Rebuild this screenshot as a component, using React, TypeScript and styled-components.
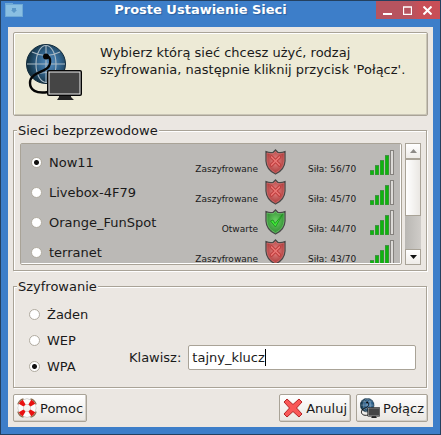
import React, { useId, useState } from "react";
import styled, { createGlobalStyle, css } from "styled-components";

const edge = "#a9a397";
const face = "#ebe7e2";

const GlobalStyle = createGlobalStyle`
  *, *::before, *::after { box-sizing: border-box; }
  body {
    margin: 0;
    font: 13px/15px "DejaVu Sans", Verdana, sans-serif;
    color: #1a1a1a;
  }
  button, input { font: inherit; color: inherit; }
`;

const Window = styled.main`
  display: flex;
  flex-direction: column;
  min-height: 100vh;
  padding: 0 7px 7px;
  border: 1px solid #24405f;
  background: #3d7ec9;
`;

const TitleBar = styled.header`
  display: grid;
  grid-template-columns: 64px 1fr 64px;
  height: 26px;
  margin: 0 -7px;
`;

const MenuButton = styled.button`
  display: block;
  justify-self: start;
  width: 18px;
  height: 14px;
  margin: 2px 0 0 4px;
  padding: 0;
  border: 0;
  background: none;
`;

const Title = styled.h1`
  margin: 0;
  padding-right: 40px;
  font-size: 13px;
  line-height: 17px;
  font-weight: bold;
  text-align: center;
  white-space: nowrap;
  color: #fff;
  text-shadow: 1px 1px 1px #2b5f9e;
`;

const WindowButtons = styled.div`
  display: flex;
  height: 18px;
  padding: 0 3px 0 1px;
  background: linear-gradient(90deg, #b7545f 0 36px, #c84f57 44px);
`;

const WindowButton = styled.button`
  flex: 1;
  display: grid;
  place-items: center;
  padding: 0;
  border: 0;
  background: none;
`;

const Body = styled.form`
  flex: 1;
  padding: 5px;
  background: ${face};
`;

const Banner = styled.section`
  display: flex;
  gap: 16px;
  min-height: 84px;
  padding: 11px 12px;
  border: 1px solid ${edge};
  border-radius: 2px;
  box-shadow: inset 1px 1px 0 #fff, inset -1px -1px 0 #c9c5b6;
  background: #edead6;
  svg { flex: none; }
`;

const BannerText = styled.p`
  margin: 0;
  padding: 0 2px;
  line-height: 17px;
`;

const Group = styled.fieldset<{ $roomy?: boolean }>`
  min-width: 0;
  margin: ${(p) => (p.$roomy ? "8px 1px 0 0" : "7px 1px 0 0")};
  padding: ${(p) => (p.$roomy ? "7px 10px 8px 15px" : "5px 5px 5px 6px")};
  border: 1px solid ${edge};
  box-shadow: 1px 1px 0 #fff, inset 1px 1px 0 #fff;
`;

const GroupTitle = styled.legend<{ $roomy?: boolean }>`
  margin-left: ${(p) => (p.$roomy ? "-12px" : "-3px")};
  padding: 0 1px;
  background: ${face};
`;

const ListArea = styled.div`
  display: grid;
  grid-template-columns: 1fr 16px;
  gap: 3px;
  height: 122px;
`;

const ListFrame = styled.div`
  display: flex;
  min-height: 0;
  padding: 0 1px 1px 0;
  border: 1px solid ${edge};
  border-radius: 2px;
  background: #fff;
`;

const NetworkList = styled.ul`
  flex: 1;
  margin: 0;
  padding: 3px 0 0;
  list-style: none;
  overflow-y: auto;
  scrollbar-width: none;
  background: #bbb9b6;
`;

const NetworkRow = styled.li`
  display: flex;
  align-items: center;
  height: 30px;
  padding: 0 6px 0 10px;
`;

const RadioLabel = styled.label<{ $tall?: boolean }>`
  flex: 1;
  display: flex;
  align-items: center;
  gap: 7px;
  ${(p) => p.$tall && css`height: 26px;`}
`;

const Radio = styled.input`
  appearance: none;
  flex: none;
  width: 11px;
  height: 11px;
  margin: 0;
  border: 1px solid #b0aba0;
  border-radius: 50%;
  background: #fff;
  &:checked {
    background: radial-gradient(circle, #111 0 2px, #fff 3px);
  }
`;

const Detail = styled.span<{ $strength?: boolean }>`
  align-self: flex-end;
  margin-bottom: 2px;
  font-size: 9px;
  line-height: 12px;
  white-space: nowrap;
  ${(p) => p.$strength && css`width: 52px; margin-left: 22px; margin-right: 10px;`}
`;

const ShieldSlot = styled.span`
  display: flex;
  margin-left: 7px;
`;

const ScrollBar = styled.div`
  display: flex;
  flex-direction: column;
  background: linear-gradient(90deg, #b9b7b3, #cfccc8);
`;

const ScrollButton = styled.button`
  display: grid;
  place-items: center;
  flex: none;
  height: 16px;
  padding: 0;
  border: 1px solid ${edge};
  background: linear-gradient(#fff, #efece8);
`;

const Thumb = styled.div`
  height: 57px;
  border: 1px solid ${edge};
  background: linear-gradient(90deg, #fff, #eae7e3);
`;

const Spring = styled.div`
  flex: 1;
`;

const Encryption = styled.div`
  display: grid;
  grid-template-columns: 100px 1fr;
  align-items: end;
`;

const KeyRow = styled.div`
  display: flex;
  align-items: center;
  gap: 7px;
  margin-bottom: 9px;
`;

const KeyField = styled.div`
  flex: 1;
  display: flex;
  align-items: center;
  height: 25px;
  padding: 0 3px;
  border: 1px solid ${edge};
  border-radius: 2px;
  background: #fff;
`;

const KeyInput = styled.input`
  field-sizing: content;
  min-width: 1px;
  padding: 0;
  border: 0;
  outline: 0;
  background: none;
  caret-color: transparent;
`;

const Caret = styled.span`
  width: 1px;
  height: 17px;
  background: #000;
`;

const Actions = styled.footer`
  display: flex;
  gap: 5px;
  margin-top: 6px;
`;

const ActionButton = styled.button`
  display: flex;
  align-items: center;
  gap: 3px;
  height: 28px;
  padding: 0 3px;
  border: 1px solid ${edge};
  border-radius: 2px;
  background: linear-gradient(#fff, #e9e6e1);
  box-shadow: inset -1px -1px 0 #d3cfc8;
  white-space: nowrap;
`;

function NetworkIcon({ size }: { size: number }) {
  const id = useId();
  return (
    <svg width={size} height={size} viewBox="0 0 56 56" aria-hidden="true">
      <defs>
        <radialGradient id={id} cx="0.58" cy="0.46" r="0.55">
          <stop offset="0" stopColor="#5b93c6" />
          <stop offset="0.5" stopColor="#336690" />
          <stop offset="1" stopColor="#143345" />
        </radialGradient>
      </defs>
      <circle cx="20" cy="20" r="19.5" fill={`url(#${id})`} stroke="#122b3b" />
      <g fill="none" stroke="#a9b9c4" strokeWidth="1.1">
        <path d="M20 1V39M1 20H39" />
        <ellipse cx="20" cy="20" rx="10" ry="18.5" />
        <path d="M6 8Q20 15 34 8M6 32Q20 25 34 32" />
      </g>
      <circle cx="20" cy="12.500" r="3" fill="#050505" />
      <path
        d="M20 11.500C26 13 25 22 20 25C14 29 4 30 4 39C4 46 10 50 22 48"
        fill="none"
        stroke="#050505"
        strokeWidth="2.4"
      />
      <path d="M33 51h12v2l3 3H31l2-3z" fill="#242424" />
      <rect x="21" y="26" width="35" height="26" rx="2" fill="#050505" />
      <rect x="23" y="28" width="31" height="22" fill="#454545" stroke="#eee" />
    </svg>
  );
}

function Shield({ open }: { open: boolean }) {
  const id = useId();
  return (
    <svg width="21" height="26" viewBox="0 0 21 26" role="img" aria-label={open ? "Otwarte" : "Zaszyfrowane"}>
      <defs>
        <radialGradient id={id} cx="0.5" cy="0.45" r="0.55">
          <stop offset="0" stopColor={open ? "#6bd064" : "#e88a88"} />
          <stop offset="1" stopColor={open ? "#2f8a31" : "#a93636"} />
        </radialGradient>
      </defs>
      <path
        d="M10.5 1L13 3.4Q16.500 4 20 2.600V12Q19.500 21 10.500 25Q1.500 21 1 12V2.600Q4.500 4 8 3.400Z"
        fill={`url(#${id})`}
        stroke="#484848"
        strokeWidth="1.300"
      />
      <path
        d="M10.500 2.700L12.600 4.600Q16 5 19 4V12Q18.400 20 10.500 23.700Q2.600 20 2 12V4Q5 5 8.400 4.600Z"
        fill="none"
        stroke={open ? "#8fd58b" : "#d98987"}
        strokeWidth="0.500"
      />
      {open ? (
        <path d="M5.500 12L8 11L10 14.500L17.500 5.500L10.500 18Z" fill="#42ee38" stroke="#1d9420" strokeWidth="0.900" />
      ) : (
        <>
          <path d="M6.500 8L14.500 16M14.500 8L6.500 16" stroke="#bb3a3a" strokeWidth="3.400" strokeLinecap="round" />
          <path d="M6.500 8L14.500 16M14.500 8L6.500 16" stroke="#ea7674" strokeWidth="1.700" strokeLinecap="round" />
        </>
      )}
    </svg>
  );
}

function SignalBars() {
  return (
    <svg width="24" height="25" viewBox="0 0 24 25" aria-hidden="true">
      {[5, 10, 15, 20].map((h, i) => (
        <g key={h}>
          <rect x={i * 5} y={25 - h} width="4" height={h} fill="#4b8a4b" />
          <rect x={i * 5 + 0.5} y={26 - h} width="3" height={h - 1.5} fill="#0eb40e" />
        </g>
      ))}
      <rect x="20.5" y="0.5" width="3" height="24" fill="#dcdad7" stroke="#85827e" />
    </svg>
  );
}

function LifeRing() {
  return (
    <svg width="20" height="20" viewBox="0 0 20 20" aria-hidden="true">
      <circle cx="10" cy="10" r="6.300" fill="none" stroke="#b9b7b4" strokeWidth="6.200" />
      <circle cx="10" cy="10" r="6.300" fill="none" stroke="#fbfbfb" strokeWidth="5.200" />
      {[45, 135, 225, 315].map((a) => (
        <g key={a} transform={`rotate(${a} 10 10)`}>
          <path d="M7.200 1.200Q10 0 12.800 1.200L11.500 6.500H8.500Z" fill="#e91111" />
          <path d="M6 1Q10 -1.300 14 1" fill="none" stroke="#8c6a4c" strokeWidth="1.200" />
        </g>
      ))}
    </svg>
  );
}

function CancelIcon() {
  return (
    <svg width="20" height="20" viewBox="0 0 20 20" aria-hidden="true">
      <path
        d="M4 1L10 6.500L16 1L19 4L13.500 10L19 16L16 19L10 13.500L4 19L1 16L6.500 10L1 4Z"
        fill="#f95757"
        stroke="#b32424"
        strokeLinejoin="round"
      />
    </svg>
  );
}

const networks = [
  { name: "Now11", open: false, strength: 56 },
  { name: "Livebox-4F79", open: false, strength: 45 },
  { name: "Orange_FunSpot", open: true, strength: 44 },
  { name: "terranet", open: false, strength: 43 },
];

const ciphers = ["Żaden", "WEP", "WPA"];

export default function App() {
  const [network, setNetwork] = useState("Now11");
  const [cipher, setCipher] = useState("WPA");
  const [key, setKey] = useState("tajny_klucz");

  return (
    <>
      <GlobalStyle />
      <Window>
        <TitleBar>
          <MenuButton type="button" aria-label="Menu okna">
            <svg width="18" height="14" viewBox="0 0 18 14">
              <path d="M0 2V0H8V2" fill="#6fa9d6" />
              <rect x="0.500" y="1.500" width="17" height="12" fill="#8abfe2" stroke="#6fa9d6" />
              <path d="M7 5h4v2h1l-3 3L6 7h1z" fill="#5b97c8" />
            </svg>
          </MenuButton>
          <Title>Proste Ustawienie Sieci</Title>
          <WindowButtons>
            <WindowButton type="button" aria-label="Minimalizuj">
              <svg width="9" height="9"><path d="M0 8H9" stroke="#fff" strokeWidth="2" /></svg>
            </WindowButton>
            <WindowButton type="button" aria-label="Maksymalizuj">
              <svg width="9" height="9"><path d="M.5 1H8.500V8.500H.5Z" fill="none" stroke="#fff" strokeWidth="1.300" /></svg>
            </WindowButton>
            <WindowButton type="button" aria-label="Zamknij">
              <svg width="9" height="9"><path d="M.5 .5L8.500 8.500M8.500 .5L.5 8.500" stroke="#fff" strokeWidth="2" /></svg>
            </WindowButton>
          </WindowButtons>
        </TitleBar>

        <Body onSubmit={(e) => e.preventDefault()}>
          <Banner>
            <NetworkIcon size={56} />
            <BannerText>
              Wybierz którą sieć chcesz użyć, rodzaj szyfrowania, następnie kliknij przycisk 'Połącz'.
            </BannerText>
          </Banner>

          <Group>
            <GroupTitle>Sieci bezprzewodowe</GroupTitle>
            <ListArea>
              <ListFrame>
                <NetworkList>
                  {networks.map((n) => (
                    <NetworkRow key={n.name}>
                      <RadioLabel>
                        <Radio
                          type="radio"
                          name="network"
                          checked={network === n.name}
                          onChange={() => setNetwork(n.name)}
                        />
                        {n.name}
                      </RadioLabel>
                      <Detail>{n.open ? "Otwarte" : "Zaszyfrowane"}</Detail>
                      <ShieldSlot>
                        <Shield open={n.open} />
                      </ShieldSlot>
                      <Detail $strength>Siła: {n.strength}/70</Detail>
                      <SignalBars />
                    </NetworkRow>
                  ))}
                </NetworkList>
              </ListFrame>
              <ScrollBar>
                <ScrollButton type="button" aria-label="Przewiń w górę">
                  <svg width="7" height="4"><path d="M0 4L3.500 0L7 4Z" fill="#8d8a86" /></svg>
                </ScrollButton>
                <Thumb />
                <Spring />
                <ScrollButton type="button" aria-label="Przewiń w dół">
                  <svg width="7" height="4"><path d="M0 0H7L3.500 4Z" fill="#111" /></svg>
                </ScrollButton>
              </ScrollBar>
            </ListArea>
          </Group>

          <Group $roomy>
            <GroupTitle $roomy>Szyfrowanie</GroupTitle>
            <Encryption>
              <div>
                {ciphers.map((c) => (
                  <RadioLabel key={c} $tall>
                    <Radio type="radio" name="cipher" checked={cipher === c} onChange={() => setCipher(c)} />
                    {c}
                  </RadioLabel>
                ))}
              </div>
              <KeyRow>
                <label htmlFor="key">Klawisz:</label>
                <KeyField>
                  <KeyInput id="key" type="text" value={key} onChange={(e) => setKey(e.target.value)} />
                  <Caret />
                </KeyField>
              </KeyRow>
            </Encryption>
          </Group>

          <Actions>
            <ActionButton type="button">
              <LifeRing />
              Pomoc
            </ActionButton>
            <Spring />
            <ActionButton type="button">
              <CancelIcon />
              Anuluj
            </ActionButton>
            <ActionButton type="submit">
              <NetworkIcon size={20} />
              Połącz
            </ActionButton>
          </Actions>
        </Body>
      </Window>
    </>
  );
}
